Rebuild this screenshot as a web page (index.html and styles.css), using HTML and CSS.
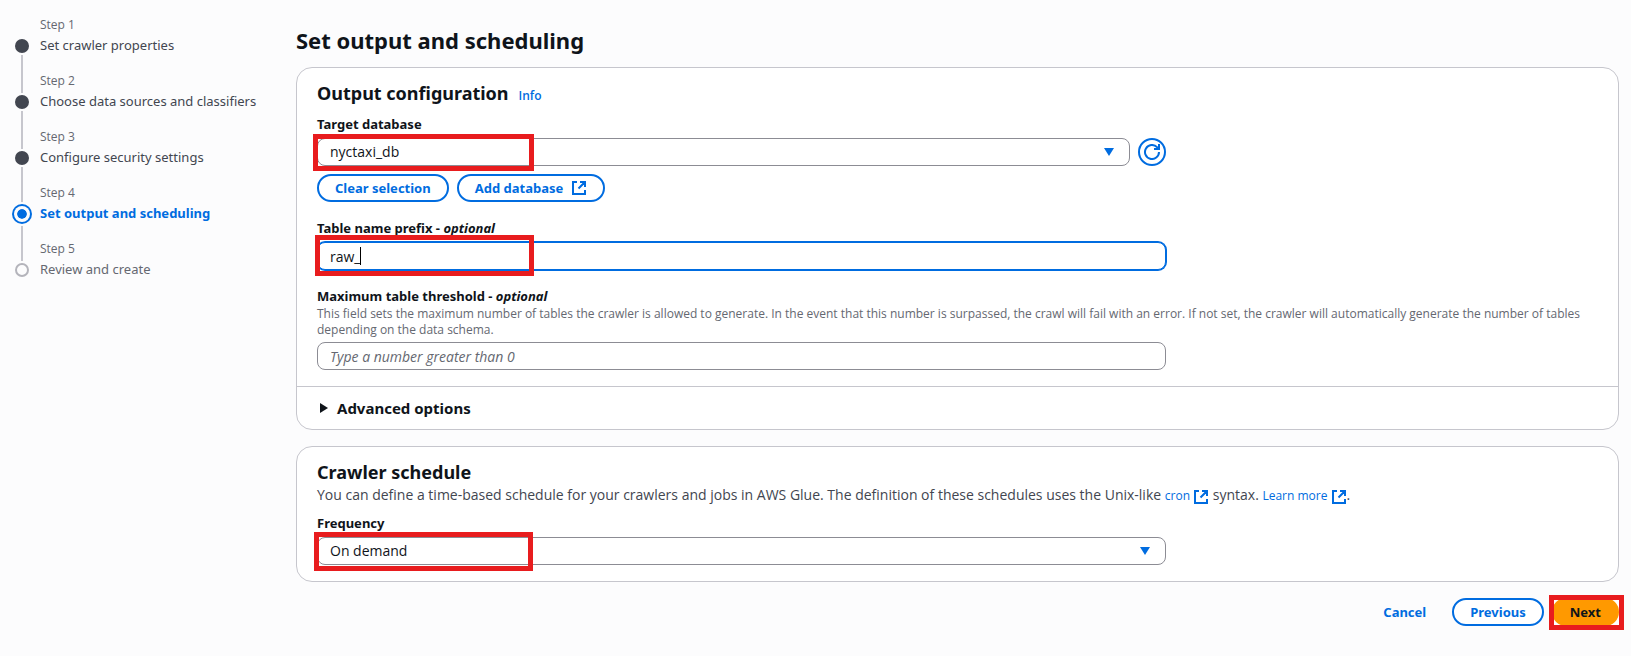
FILE: index.html
```html
<!DOCTYPE html>
<html lang="en">
<head>
<meta charset="utf-8">
<title>Set output and scheduling</title>
<link rel="stylesheet" href="styles.css">
</head>
<body>
<svg class="sprite" aria-hidden="true">
  <symbol id="external" viewBox="0 0 16 16">
    <path d="M6 2H2v12h12v-4M9 2h5v5M14 2 7.500 8.500" fill="none" stroke="currentColor" stroke-width="2"/>
  </symbol>
</svg>
<div class="wizard">
  <nav class="steps" aria-label="Steps">
    <ol class="step-list">
      <li class="step done"><div class="track"><span class="dot"></span></div><div class="step-text"><span class="step-no">Step 1</span><a class="step-name" href="#s1">Set crawler properties</a></div></li>
      <li class="step done"><div class="track"><span class="dot"></span></div><div class="step-text"><span class="step-no">Step 2</span><a class="step-name" href="#s2">Choose data sources and classifiers</a></div></li>
      <li class="step done"><div class="track"><span class="dot"></span></div><div class="step-text"><span class="step-no">Step 3</span><a class="step-name" href="#s3">Configure security settings</a></div></li>
      <li class="step active" aria-current="step"><div class="track"><span class="dot"></span></div><div class="step-text"><span class="step-no">Step 4</span><span class="step-name">Set output and scheduling</span></div></li>
      <li class="step"><div class="track"><span class="dot"></span></div><div class="step-text"><span class="step-no">Step 5</span><span class="step-name">Review and create</span></div></li>
    </ol>
  </nav>
  <main class="main">
    <h1 class="page-title">Set output and scheduling</h1>
    <form class="form">
      <section class="card">
        <div class="card-head">
          <h2 class="card-title">Output configuration</h2>
          <a class="info" href="#info">Info</a>
        </div>
        <div class="card-body">
          <div class="field">
            <label class="label" for="db">Target database</label>
            <div class="columns">
              <div class="control-row">
                <div class="control">
                  <select class="input select" id="db"><option>nyctaxi_db</option></select>
                  <svg class="caret-down" viewBox="0 0 10 8" aria-hidden="true"><path d="M0 0h10L5 8z"/></svg>
                  <span class="mark mark-db"></span>
                </div>
                <button class="icon-button" type="button" aria-label="Refresh">
                  <svg class="icon" viewBox="0 0 16 16" aria-hidden="true"><path d="M15 8a7 7 0 1 1-2-4.900L14 4.500M15 0v5h-5" fill="none" stroke="currentColor" stroke-width="2"/></svg>
                </button>
              </div>
            </div>
            <div class="button-row">
              <button class="button" type="button">Clear selection</button>
              <button class="button" type="button">Add database <svg class="icon" aria-hidden="true"><use href="#external"/></svg></button>
            </div>
          </div>
          <div class="field">
            <label class="label" for="prefix">Table name prefix - <i>optional</i></label>
            <div class="columns">
              <div class="control">
                <input class="input focused" id="prefix" type="text" value="raw_">
                <span class="text-caret"></span>
                <span class="mark mark-prefix"></span>
              </div>
            </div>
          </div>
          <div class="field">
            <label class="label" for="max">Maximum table threshold - <i>optional</i></label>
            <p class="hint" id="max-hint">This field sets the maximum number of tables the crawler is allowed to generate. In the event that this number is surpassed, the crawl will fail with an error. If not set, the crawler will automatically generate the number of tables depending on the data schema.</p>
            <div class="columns">
              <input class="input" id="max" type="text" placeholder="Type a number greater than 0" aria-describedby="max-hint">
            </div>
          </div>
        </div>
        <div class="card-foot">
          <button class="expander" type="button" aria-expanded="false"><svg class="caret-right" viewBox="0 0 8 10" aria-hidden="true"><path d="M0 0v10l8-5z"/></svg>Advanced options</button>
        </div>
      </section>
      <section class="card">
        <div class="card-head stacked">
          <h2 class="card-title">Crawler schedule</h2>
          <p class="description">You can define a time-based schedule for your crawlers and jobs in AWS Glue. The definition of these schedules uses the Unix-like <a class="link" href="#cron">cron <svg class="icon" aria-hidden="true"><use href="#external"/></svg></a> syntax. <a class="link" href="#learn">Learn more <svg class="icon" aria-hidden="true"><use href="#external"/></svg></a>.</p>
        </div>
        <div class="card-body">
          <div class="field">
            <label class="label" for="freq">Frequency</label>
            <div class="columns">
              <div class="control">
                <select class="input select" id="freq"><option>On demand</option></select>
                <svg class="caret-down" viewBox="0 0 10 8" aria-hidden="true"><path d="M0 0h10L5 8z"/></svg>
                <span class="mark mark-freq"></span>
              </div>
            </div>
          </div>
        </div>
      </section>
      <div class="actions">
        <button class="button plain" type="button">Cancel</button>
        <button class="button" type="button">Previous</button>
        <div class="next-wrap">
          <button class="button primary" type="button">Next</button>
          <span class="mark mark-next"></span>
        </div>
      </div>
    </form>
  </main>
</div>
</body>
</html>
```
FILE: styles.css
```css
:root {
  --blue: #006ce0;
  --text: #0f141a;
  --page: #fcfcfd;
  --red: #e81c1e;
  --heading-face: "Noto Sans", "Open Sans", sans-serif;
}
* { box-sizing: border-box; }
body {
  margin: 0;
  background: var(--page);
  color: var(--text);
  font: 14px/20px "Open Sans", "Noto Sans", sans-serif;
}
h1, h2, p, ol { margin: 0; padding: 0; }
h1, h2 { font-family: var(--heading-face); }
button, input, select { font: inherit; color: inherit; margin: 0; }
a { color: var(--blue); text-decoration: none; }
.sprite { display: none; }
.wizard {
  display: grid;
  grid-template-columns: 264px minmax(0, 1fr);
  gap: 20px;
  padding: 17px 12px 30px;
}

/* Steps */
.step-list { list-style: none; }
.step { display: flex; gap: 8px; height: 56px; }
.step:first-child { height: 38px; }
.track {
  display: flex;
  flex-direction: column;
  justify-content: flex-end;
  align-items: center;
  gap: 2px;
  width: 20px;
  padding-bottom: 2px;
}
.step + .step .track::before { content: ""; flex: 1; width: 2px; background: #c6c6cd; }
.dot { width: 14px; height: 14px; border: 2px solid #b4b4bb; border-radius: 50%; background: var(--page); }
.done .dot { border-color: #424650; background: #424650; }
.active .dot {
  position: relative;
  z-index: 1;
  border-color: var(--page);
  background: var(--blue) padding-box;
  box-shadow: 0 0 0 1px var(--page), 0 0 0 3px var(--blue), 0 0 0 5px var(--page);
}
.step-text { display: flex; flex-direction: column; justify-content: flex-end; gap: 2px; color: #656871; }
.step-no { font-size: 12px; line-height: 16px; }
.step-name { color: inherit; font: 13px/20px var(--heading-face); }
.done .step-name { color: #424650; }
.active .step-name { color: var(--blue); font-weight: 700; }

/* Content */
.page-title { padding-top: 8px; font-size: 22px; line-height: 30px; }
.form { display: flex; flex-direction: column; gap: 16px; padding-top: 12px; }
.card { border: 1px solid #c6c6cd; border-radius: 16px; background: #fff; }
.card-head { display: flex; align-items: baseline; gap: 10px; padding: 13px 20px 9px; }
.stacked { flex-direction: column; gap: 1px; padding-bottom: 8px; }
.card-title { font-size: 18px; line-height: 24px; }
.info { font-size: 12px; font-weight: 600; line-height: 16px; }
.card-body { display: flex; flex-direction: column; gap: 16px; padding: 0 20px 16px; }
.label { display: block; margin-bottom: 4px; font: 700 13px/20px var(--heading-face); }
.label:has(+ .hint) { margin-bottom: 0; }
.hint { margin-bottom: 4px; color: #656871; font-size: 12px; line-height: 16px; }
.description { color: #424650; }
.link { font-size: 12px; line-height: 16px; }

.columns { display: grid; grid-template-columns: 2fr 1fr; gap: 8px; }
.control-row { display: flex; gap: 8px; }
.control { position: relative; display: flex; flex: 1; }
.input {
  width: 100%;
  height: 28px;
  padding: 0 12px;
  border: 1px solid #8c8c94;
  border-radius: 8px;
  background: #fff;
  outline: none;
}
.input::placeholder { color: #656871; font-style: italic; opacity: 1; }
.select { appearance: none; }
.focused { border-color: var(--blue); box-shadow: 0 0 0 1px var(--blue); }
.caret-down { position: absolute; top: 10px; right: 16px; width: 10px; height: 8px; fill: var(--blue); }
.text-caret { position: absolute; top: 5px; left: 43px; width: 1px; height: 18px; background: #000; }

.button-row { display: flex; gap: 8px; margin-top: 8px; }
.button {
  display: flex;
  align-items: center;
  gap: 8px;
  height: 28px;
  padding: 0 16px;
  border: 2px solid var(--blue);
  border-radius: 14px;
  background: #fff;
  color: var(--blue);
  font: 700 13px/20px var(--heading-face);
}
.icon { width: 16px; height: 16px; }
.link .icon { margin: -2px 0; vertical-align: -3px; }
.icon-button {
  display: grid;
  place-items: center;
  width: 28px;
  height: 28px;
  padding: 0;
  border: 2px solid var(--blue);
  border-radius: 50%;
  background: #fff;
  color: var(--blue);
}
.card-foot { padding: 11px 20px; border-top: 1px solid #c6c6cd; }
.expander {
  display: flex;
  align-items: center;
  gap: 9px;
  padding: 0 3px;
  border: 0;
  background: none;
  font: 700 15px/20px var(--heading-face);
}
.caret-right { width: 8px; height: 10px; fill: var(--text); }

.actions { display: flex; justify-content: flex-end; gap: 8px; }
.plain { border-color: transparent; background: none; }
.next-wrap { position: relative; background: #fff; }
.primary { border-color: #ff9900; background: #ff9900; color: var(--text); }

/* Highlight frames */
.mark { position: absolute; border: 5px solid var(--red); pointer-events: none; }
.mark-db { top: -4px; left: -4px; width: 221px; height: 37px; }
.mark-prefix { top: -7px; left: -2px; width: 219px; height: 41px; }
.mark-freq { top: -5px; left: -3px; width: 219px; height: 39px; }
.mark-next { inset: -3px -5px -4px -3px; }
```
